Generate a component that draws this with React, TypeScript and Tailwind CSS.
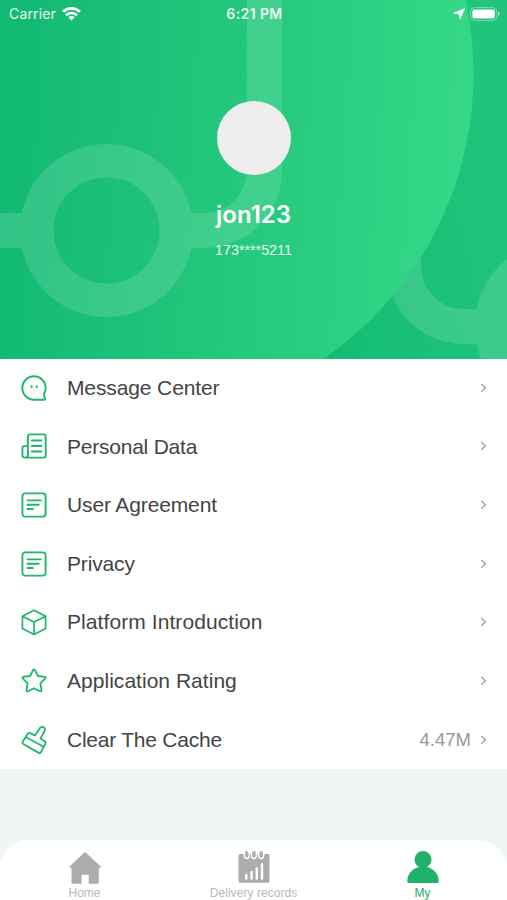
import type { ReactNode } from "react";

const iconProps = {
  className: "h-7 w-7 text-[#1fb56c]",
  viewBox: "0 0 28 28",
  fill: "none",
  stroke: "currentColor",
  strokeWidth: 1.9,
  strokeLinecap: "round" as const,
  strokeLinejoin: "round" as const,
};

function MessageIcon() {
  return (
    <svg {...iconProps}>
      <path d="M14 25.7A11.7 11.7 0 1 1 25.7 14Q25.6 17.6 23.9 19.9Q24 22.8 25.1 24.4Q25.4 25.6 24.3 25.7Z" />
      <path d="M11.6 12.2v.9M16.8 12.2v.9" strokeWidth={2} />
    </svg>
  );
}

function NewspaperIcon() {
  return (
    <svg {...iconProps}>
      <path d="M7.9 23V4.4a2 2 0 0 1 2-2H23.7a2 2 0 0 1 2 2V23.6a2 2 0 0 1-2 2H5a2.6 2.6 0 0 1-2.6-2.6V15.9a1.8 1.8 0 0 1 1.8-1.8H7.9M7.9 23a2.6 2.6 0 0 1-2.4 2.6" />
      <path d="M11.8 8.5h9.7M11.8 14h9.7M11.8 19.5h9.7" />
    </svg>
  );
}

function DocumentIcon() {
  return (
    <svg {...iconProps}>
      <rect x="2.4" y="2.4" width="23.2" height="23.2" rx="2.8" />
      <path d="M7.5 9.4h13.3M7.5 13.7h11.2M7.5 18h5.4" />
    </svg>
  );
}

function BoxIcon() {
  return (
    <svg {...iconProps} strokeWidth={1.7}>
      <path d="M14 2.2 25.6 8.2V20.4L14 26.4 2.4 20.4V8.2ZM2.4 8.2 14 13.9 25.6 8.2M14 13.9V26.4" />
    </svg>
  );
}

function StarIcon() {
  return (
    <svg {...iconProps} strokeWidth={1.8}>
      <path d="M13.2 2.9Q14 1.7 14.8 2.9L17.9 9 24.9 9.9Q26.2 10.3 25.3 11.4L20.4 16.3 21.5 23.2Q21.5 24.8 20 24.2L14 21.3 8 24.2Q6.5 24.8 6.5 23.2L7.6 16.3 2.7 11.4Q1.8 10.3 3.1 9.9L10.1 9Z" />
    </svg>
  );
}

function BrushIcon() {
  return (
    <svg {...iconProps} strokeWidth={1.8}>
      <path d="M7.4 8.2Q8.3 6.3 10 7.1L14.9 9.4 20 2Q21.9 0.2 24 1.4Q25.6 2.9 24.7 4.7L20.5 12.6 24.7 15.3Q26.1 16.3 25.3 17.8L20.8 26.3Q20 27.6 18.7 26.9L3.4 18Q1.9 17.1 2.7 15.8ZM5.8 11 23.5 20.8" />
    </svg>
  );
}

type MenuItem = {
  label: string;
  tracking: string;
  icon: ReactNode;
  value?: string;
};

const menuItems: MenuItem[] = [
  { label: "Message Center", tracking: "tracking-[-0.12px]", icon: <MessageIcon /> },
  { label: "Personal Data", tracking: "tracking-[-0.23px]", icon: <NewspaperIcon /> },
  { label: "User Agreement", tracking: "tracking-[-0.13px]", icon: <DocumentIcon /> },
  { label: "Privacy", tracking: "tracking-[-0.15px]", icon: <DocumentIcon /> },
  { label: "Platform Introduction", tracking: "tracking-[0.08px]", icon: <BoxIcon /> },
  { label: "Application Rating", tracking: "tracking-[0.03px]", icon: <StarIcon /> },
  { label: "Clear The Cache", tracking: "tracking-[-0.23px]", icon: <BrushIcon />, value: "4.47M" },
];

function HeaderArt() {
  return (
    <svg
      className="absolute inset-0 h-full w-full"
      viewBox="0 0 507 359"
      preserveAspectRatio="none"
      fill="none"
    >
      <defs>
        <linearGradient id="base" gradientUnits="userSpaceOnUse" x1="330" y1="345" x2="530" y2="300">
          <stop stopColor="#15bc74" />
          <stop offset="1" stopColor="#20c57b" />
        </linearGradient>
        <linearGradient id="disc" gradientUnits="userSpaceOnUse" x1="0" y1="160" x2="470" y2="190">
          <stop stopColor="#12b973" />
          <stop offset="0.5" stopColor="#24c87c" />
          <stop offset="1" stopColor="#36d888" />
        </linearGradient>
      </defs>
      <rect width="507" height="359" fill="url(#base)" />
      <g opacity="0.13">
        <path d="M403.5 240V266A60.5 60.5 0 0 0 464 326.5H480" stroke="#fff" strokeWidth="35" />
        <circle cx="561" cy="326.5" r="86.5" fill="#fff" />
      </g>
      <circle cx="128.5" cy="74" r="345" fill="url(#disc)" />
      <g stroke="#fff" opacity="0.13">
        <circle cx="106.5" cy="230.5" r="69.75" strokeWidth="33.5" />
        <path d="M0 230.5H30" strokeWidth="35" />
        <path d="M183 230.5H204A60.5 60.5 0 0 0 264.5 170V0" strokeWidth="35" />
      </g>
    </svg>
  );
}

function StatusBar() {
  return (
    <div className="relative grid h-[27px] grid-cols-3 items-center pr-[7px] pl-[9px] font-['Inter',sans-serif] text-white">
      <div className="flex items-center gap-[6px] text-[14px] text-white/90">
        <span className="tracking-[0.15px]">Carrier</span>
        <svg className="h-[14px] w-[19px]" viewBox="0 0 19 14" fill="none" stroke="#fff" strokeWidth="2.7">
          <path d="M1 4.8a12.2 12.2 0 0 1 17 0M4 8.2a8 8 0 0 1 11 0" />
          <path d="M9.5 13.5 6.3 10.3a4.6 4.6 0 0 1 6.4 0Z" fill="#fff" stroke="none" />
        </svg>
      </div>
      <span className="text-center text-[14px] font-semibold tracking-[0.4px] whitespace-nowrap text-white/90">
        6:21 PM
      </span>
      <div className="flex items-center justify-end gap-[5px]">
        <svg className="h-3 w-3" viewBox="0 0 12 12" fill="#fff">
          <path d="M11.6 0.5 7 11.3 6 6.2 0.6 5.1Z" stroke="#fff" strokeWidth="0.6" strokeLinejoin="round" />
        </svg>
        <svg className="h-[14px] w-[30px]" viewBox="0 0 30 14" fill="none">
          <rect x="0.6" y="0.6" width="26.2" height="12.8" rx="3.8" stroke="#fff" strokeOpacity="0.4" />
          <rect x="2.4" y="2.4" width="22.4" height="9.2" rx="2" fill="#fff" />
          <path d="M28 4.8v4.4q1.7-.6 1.7-2.2t-1.7-2.2" fill="#fff" fillOpacity="0.5" />
        </svg>
      </div>
    </div>
  );
}

function ProfileHeader() {
  return (
    <header className="relative h-[359px] shrink-0 overflow-hidden">
      <HeaderArt />
      <StatusBar />
      <div className="relative flex flex-col items-center pt-[74px] text-white">
        <div className="h-[74px] w-[74px] rounded-full bg-[#eeeeee]" />
        <h1 className="mt-[25px] font-['Inter',sans-serif] text-[24px] leading-[30px] font-semibold">jon123</h1>
        <p className="mt-[10px] text-[14.3px] leading-5 text-white/90">173****5211</p>
      </div>
    </header>
  );
}

function MenuRow({ item }: { item: MenuItem }) {
  return (
    <li className="flex h-[58.6px] items-center pr-5 pl-5">
      {item.icon}
      <span className={`ml-[19px] text-[21px] text-[#444444] ${item.tracking}`}>{item.label}</span>
      <span className="ml-auto text-[18.5px] text-[#999999]">{item.value}</span>
      <svg className="ml-[9px] h-3 w-[7px]" viewBox="0 0 7 12" fill="none" stroke="#a3a3a3" strokeWidth="1.4">
        <path d="M1.2 1.9 5.4 5.8 1.2 9.7" />
      </svg>
    </li>
  );
}

function TabBar() {
  return (
    <nav className="mt-auto grid h-[60px] grid-cols-3 rounded-t-[28px] bg-white text-[12px] text-[#b8b8b8]">
      <div className="flex flex-col items-center pt-[10px]">
        <svg className="h-[34px] w-[34px]" viewBox="0 0 34 34" fill="#acacac">
          <path d="M16 2.8Q17 1.9 18 2.8L32.8 16.4Q33.6 17.6 32.3 17.8H30.8V32.2Q30.8 33.8 29.3 33.8H20.7V24.8H13.5V33.8H5Q3.5 33.8 3.5 32.2V17.8H2Q0.7 17.6 1.5 16.4Z" />
        </svg>
        <span className="mt-[1px] leading-4">Home</span>
      </div>
      <div className="flex flex-col items-center pt-[10px]">
        <svg className="h-[34px] w-[34px]" viewBox="0 0 34 34">
          <path d="M1.5 5.5Q1.5 4 3 4H31Q32.5 4 32.5 5.5V31Q32.5 32.8 30.7 32.8H3.3Q1.5 32.8 1.5 31Z" fill="#acacac" />
          <g fill="#acacac" stroke="#fff" strokeWidth="1.4">
            <rect x="7.4" y="0.3" width="4.8" height="8.2" rx="2.4" />
            <rect x="14.6" y="0.3" width="4.8" height="8.2" rx="2.4" />
            <rect x="21.8" y="0.3" width="4.8" height="8.2" rx="2.4" />
          </g>
          <path d="M9.3 25v3.5M14.6 22v6.5M19.8 18.5v10M25 14.2V28.5" stroke="#fff" strokeWidth="2.5" strokeLinecap="round" />
        </svg>
        <span className="mt-[1px] leading-4 tracking-[0.05px]">Delivery records</span>
      </div>
      <div className="flex flex-col items-center pt-[10px] text-[#20b26b]">
        <svg className="h-[34px] w-[34px]" viewBox="0 0 34 34" fill="currentColor">
          <circle cx="17" cy="9.6" r="8.5" />
          <path d="M1.2 31Q1.6 21.5 10.5 17.7Q13.4 16.5 17 16.5T23.5 17.7Q32.4 21.5 32.8 31Q32.8 32.9 31.3 32.9H2.7Q1.2 32.9 1.2 31Z" />
        </svg>
        <span className="mt-[1px] leading-4">My</span>
      </div>
    </nav>
  );
}

export default function App() {
  return (
    <div className="flex h-[900px] w-[507px] flex-col overflow-hidden bg-[#eff5f5] font-['Liberation_Sans',Arial,sans-serif]">
      <ProfileHeader />
      <ul className="divide-y divide-[#fcfcfc] bg-white">
        {menuItems.map((item) => (
          <MenuRow key={item.label} item={item} />
        ))}
      </ul>
      <TabBar />
    </div>
  );
}
